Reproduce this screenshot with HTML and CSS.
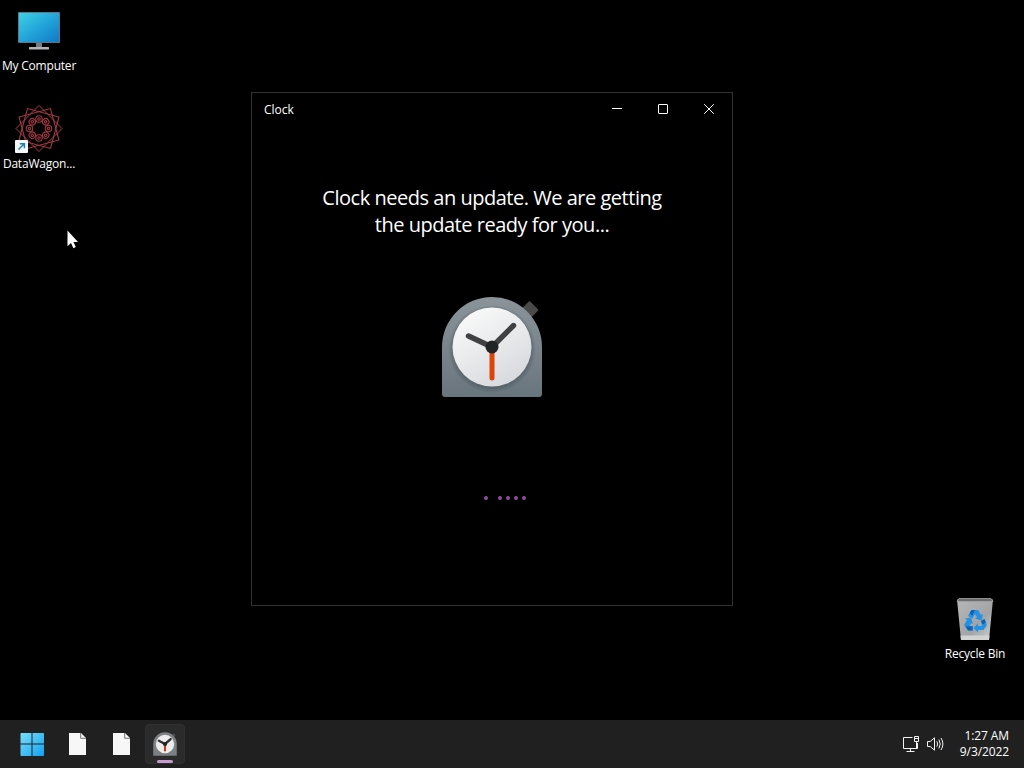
FILE: index.html
```html
<!DOCTYPE html>
<html lang="en">
<head>
    <meta charset="UTF-8">
    <meta name="viewport" content="width=device-width, initial-scale=1.0">
    <title>Desktop</title>
    <link rel="stylesheet" href="styles.css">
</head>
<body>
    <main class="desktop">
        <div class="shortcut my-computer">
            <svg width="48" height="48" viewBox="0 0 48 48">
                <defs>
                    <linearGradient id="screen" x1="0" y1="0" x2="1" y2="1">
                        <stop offset="0" stop-color="#3fd0e2"/>
                        <stop offset="0.5" stop-color="#23a5da"/>
                        <stop offset="1" stop-color="#1079c4"/>
                    </linearGradient>
                </defs>
                <rect x="21" y="34" width="6" height="6" fill="#777b7f"/>
                <rect x="14" y="39" width="20" height="2.6" rx="0.5" fill="#b4b5b6"/>
                <rect x="3" y="4" width="42" height="31" rx="1" fill="#587989"/>
                <rect x="4" y="5" width="40" height="29" fill="url(#screen)"/>
            </svg>
            <span>My Computer</span>
        </div>

        <div class="shortcut datawagon">
            <svg width="48" height="48" viewBox="0 0 48 48">
                <defs>
                    <path id="square" d="M0-23 23 0 0 23-23 0z"/>
                    <g id="petal">
                        <circle cy="-9.5" r="3.2"/>
                        <circle cy="-9.5" r="1.2"/>
                    </g>
                </defs>
                <g transform="translate(24 23.5)" fill="none" stroke="#d84a5b">
                    <g opacity="0.8">
                        <use href="#square"/>
                        <use href="#square" transform="rotate(30)"/>
                        <use href="#square" transform="rotate(60)"/>
                    </g>
                    <g opacity="0.75" stroke-width="1.1">
                        <use href="#petal"/>
                        <use href="#petal" transform="rotate(45)"/>
                        <use href="#petal" transform="rotate(90)"/>
                        <use href="#petal" transform="rotate(135)"/>
                        <use href="#petal" transform="rotate(180)"/>
                        <use href="#petal" transform="rotate(225)"/>
                        <use href="#petal" transform="rotate(270)"/>
                        <use href="#petal" transform="rotate(315)"/>
                    </g>
                </g>
                <rect x="0" y="35" width="13" height="13" rx="1" fill="#f4f8fa"/>
                <path d="M3.5 44.5 9.2 38.8M4.8 38.7H9.4V43.3" fill="none" stroke="#1583ba" stroke-width="1.5"/>
            </svg>
            <span>DataWagon...</span>
        </div>

        <div class="shortcut recycle-bin">
            <svg width="48" height="48" viewBox="0 0 48 48">
                <defs>
                    <linearGradient id="bin" x1="0" y1="0" x2="1" y2="1">
                        <stop offset="0" stop-color="#b5b7b8"/>
                        <stop offset="0.6" stop-color="#a2a4a5"/>
                        <stop offset="1" stop-color="#d0d1d1"/>
                    </linearGradient>
                </defs>
                <path d="M6 4.5 42 4.5 38 45H10z" fill="url(#bin)"/>
                <path d="M9.5 40.5H38.5L38 45H10z" fill="#d2d2d2"/>
                <path d="M8 3.5H40L42 6.5H6z" fill="#6c6e6f" stroke="#a4a5a6" stroke-width="0.8"/>
                <g fill="#2492e4">
                    <path d="M17 21 20.5 15H27L30 20 32 19 30.5 25.5 24 23.5 26 22.3 23.8 19 21.5 23.5z"/>
                    <path d="M30 26 33.5 24 36 30 32.5 35H27V37.5L22.5 33 27 28.5V31H31z"/>
                    <path d="M14 23.5 20 22.5 22 29 20 28 18.5 31H22V35.5H17L13 30 16 25z"/>
                </g>
                <path d="M20.5 15H24L21.5 20.5 18.5 18.5zM14.5 31.2H21.5V35.5H17zM30 26 33.5 24 34.8 27.5 31.5 29.5z" fill="#0d63b6"/>
            </svg>
            <span>Recycle Bin</span>
        </div>

        <section class="window">
            <header class="title-bar">
                <span class="title">Clock</span>
                <div class="controls">
                    <svg width="46" height="32" viewBox="0 0 46 32"><path d="M18 15.5H28"/></svg>
                    <svg width="46" height="32" viewBox="0 0 46 32"><rect x="18.5" y="11.5" width="9" height="9" rx="0.5"/></svg>
                    <svg width="46" height="32" viewBox="0 0 46 32"><path d="M18.2 11.2 27.8 20.8M27.8 11.2 18.2 20.8"/></svg>
                </div>
            </header>
            <p class="message">
                Clock needs an update. We are getting<br>
                the update ready for you...
            </p>
            <svg class="clock" width="100" height="102" viewBox="0 0 100 102">
                <defs>
                    <linearGradient id="case" x1="0" y1="0" x2="0" y2="1">
                        <stop offset="0" stop-color="#8b949b"/>
                        <stop offset="1" stop-color="#69757d"/>
                    </linearGradient>
                    <linearGradient id="face" x1="0.2" y1="0" x2="0.8" y2="1">
                        <stop offset="0" stop-color="#fafafa"/>
                        <stop offset="1" stop-color="#d5d8dc"/>
                    </linearGradient>
                    <radialGradient id="shade">
                        <stop offset="0.88" stop-color="#3f4a52" stop-opacity="0.45"/>
                        <stop offset="1" stop-color="#3f4a52" stop-opacity="0"/>
                    </radialGradient>
                </defs>
                <rect x="-6.5" y="-6.5" width="13" height="13" rx="1" transform="translate(87.5 14) rotate(45)" fill="#4a4a4b"/>
                <path d="M0 51A50 50 0 0 1 100 51V98Q100 101 97 101H3Q0 101 0 98z" fill="url(#case)"/>
                <circle cx="50" cy="53" r="44" fill="url(#shade)"/>
                <circle cx="50" cy="51" r="39.5" fill="url(#face)"/>
                <path d="M50 51 26.5 40M50 51 71.5 29.5" stroke="#414143" stroke-width="5.4" stroke-linecap="round"/>
                <path d="M50 52V82" stroke="#dc4509" stroke-width="5" stroke-linecap="round"/>
                <circle cx="50" cy="51" r="6.5" fill="#222326"/>
            </svg>
            <div class="progress">
                <i></i><i></i><i></i><i></i><i></i>
            </div>
        </section>

        <svg class="cursor" width="14" height="20" viewBox="0 0 14 20">
            <path d="M0.5 0.5V16.2L4 12.9 6.4 18.2 8.8 17.1 6.5 12H11z" fill="#fff"/>
        </svg>
    </main>

    <footer class="taskbar">
        <div class="apps">
            <div class="app start">
                <svg width="24" height="24" viewBox="0 0 24 24">
                    <defs>
                        <linearGradient id="start" gradientUnits="userSpaceOnUse" x1="0" y1="0" x2="24" y2="24">
                            <stop offset="0" stop-color="#7ce0fc"/>
                            <stop offset="1" stop-color="#12a0ef"/>
                        </linearGradient>
                    </defs>
                    <path d="M1 1H11.5V11.5H0.5V1.5zM12.5 1H23.5L24 1.5V11.5H12.5zM0.5 12.5H11.5V24H1L0.5 23.5zM12.5 12.5H24V23.5L23.5 24H12.5z" fill="url(#start)"/>
                </svg>
            </div>
            <div class="app">
                <svg width="24" height="24" viewBox="0 0 24 24">
                    <path d="M4 1H16L21 6V23H4z" fill="#f7f7f7"/>
                    <path d="M15.7 1V6.3H21" fill="none" stroke="#707070"/>
                </svg>
            </div>
            <div class="app">
                <svg width="24" height="24" viewBox="0 0 24 24">
                    <path d="M4 1H16L21 6V23H4z" fill="#f7f7f7"/>
                    <path d="M15.7 1V6.3H21" fill="none" stroke="#707070"/>
                </svg>
            </div>
            <div class="app active">
                <svg width="24" height="24" viewBox="0 0 100 102">
                    <rect x="-7" y="-6" width="14" height="12" transform="translate(87 14) rotate(45)" fill="#4a4a4b"/>
                    <path d="M0 51A50 50 0 0 1 100 51V101H0z" fill="#7c8083"/>
                    <circle cx="50" cy="51" r="39" fill="#ececec"/>
                    <path d="M50 51 24 37M50 51 74 30" stroke="#303030" stroke-width="10" stroke-linecap="round"/>
                    <path d="M50 51V82" stroke="#c43b17" stroke-width="9"/>
                    <circle cx="50" cy="51" r="9" fill="#222"/>
                </svg>
            </div>
        </div>
        <div class="tray">
            <svg width="18" height="18" viewBox="0 0 18 18">
                <path d="M10.5 2.5H1.5V13.5H15.5V8M8.5 13.5V16.5M4.5 16.5H12.5M12.5 1.5H16.5V6.5H12.5zM14.5 6.5V13.5M12.5 3.5H16.5"/>
            </svg>
            <svg width="18" height="18" viewBox="0 0 18 18">
                <path d="M1.5 6.5H4.2L8.5 2.8V15.2L4.2 11.5H1.5zM10.8 6.3Q12.6 9 10.8 11.7M12.9 4.6Q15.7 9 12.9 13.4M15 3Q18.8 9 15 15"/>
            </svg>
            <div class="datetime">
                <div class="time">1:27 AM</div>
                <div class="date">9/3/2022</div>
            </div>
        </div>
    </footer>
</body>
</html>
```
FILE: styles.css
```css
* {
    box-sizing: border-box;
}

body {
    margin: 0;
    height: 768px;
    display: flex;
    flex-direction: column;
    overflow: hidden;
    background-color: #000;
    color: #fff;
    font-family: "Open Sans", "Noto Sans", sans-serif;
    font-size: 12px;
}

svg {
    display: block;
    overflow: visible;
    flex: none;
}

.desktop {
    position: relative;
    flex: 1;
}

.shortcut {
    position: absolute;
    width: 78px;
    display: flex;
    flex-direction: column;
    align-items: center;
    gap: 3px;
    line-height: 16px;
    letter-spacing: -0.2px;
    white-space: nowrap;
}

.my-computer {
    left: 0;
    top: 8px;
    gap: 2px;
}

.datawagon {
    left: 0;
    top: 105px;
}

.recycle-bin {
    left: 936px;
    top: 595px;
}

.window {
    position: absolute;
    left: 251px;
    top: 92px;
    width: 482px;
    height: 514px;
    border: 1px solid #333;
    display: flex;
    flex-direction: column;
    align-items: center;
}

.title-bar {
    width: 100%;
    height: 32px;
    display: flex;
    align-items: center;
    justify-content: space-between;
    padding-left: 12px;
}

.controls {
    display: flex;
}

.controls svg {
    fill: none;
    stroke: #fff;
}

.message {
    margin: 59px 0 0;
    font-size: 20px;
    line-height: 27px;
    letter-spacing: -0.48px;
    text-align: center;
    white-space: nowrap;
}

.clock {
    margin-top: 58px;
}

.progress {
    display: flex;
    gap: 4px;
    margin-top: 98px;
    margin-left: 39px;
    width: 56px;
}

.progress i {
    width: 4px;
    height: 4px;
    border-radius: 50%;
    background-color: #8f4f9f;
}

.progress i:first-child {
    margin-right: 6px;
}

.cursor {
    position: absolute;
    left: 67px;
    top: 230px;
}

.taskbar {
    height: 48px;
    display: flex;
    align-items: center;
    justify-content: space-between;
    padding: 0 15px 0 12px;
    background-color: #202020;
}

.apps {
    display: flex;
    gap: 4px;
}

.app {
    position: relative;
    width: 40px;
    height: 40px;
    display: flex;
    align-items: center;
    justify-content: center;
}

.start {
    margin-right: 1px;
}

.active {
    border: 1px solid #303030;
    border-radius: 4px;
    background-color: #2b2b2b;
}

.active::after {
    content: "";
    position: absolute;
    left: 11px;
    bottom: 0;
    width: 16px;
    height: 3px;
    border-radius: 2px;
    background-color: #c79bd0;
}

.tray {
    display: flex;
    align-items: center;
    gap: 6px;
}

.tray svg {
    fill: none;
    stroke: #f2f2f2;
}

.datetime {
    width: 59px;
    text-align: right;
    line-height: 16px;
    letter-spacing: -0.1px;
    white-space: nowrap;
}
```
